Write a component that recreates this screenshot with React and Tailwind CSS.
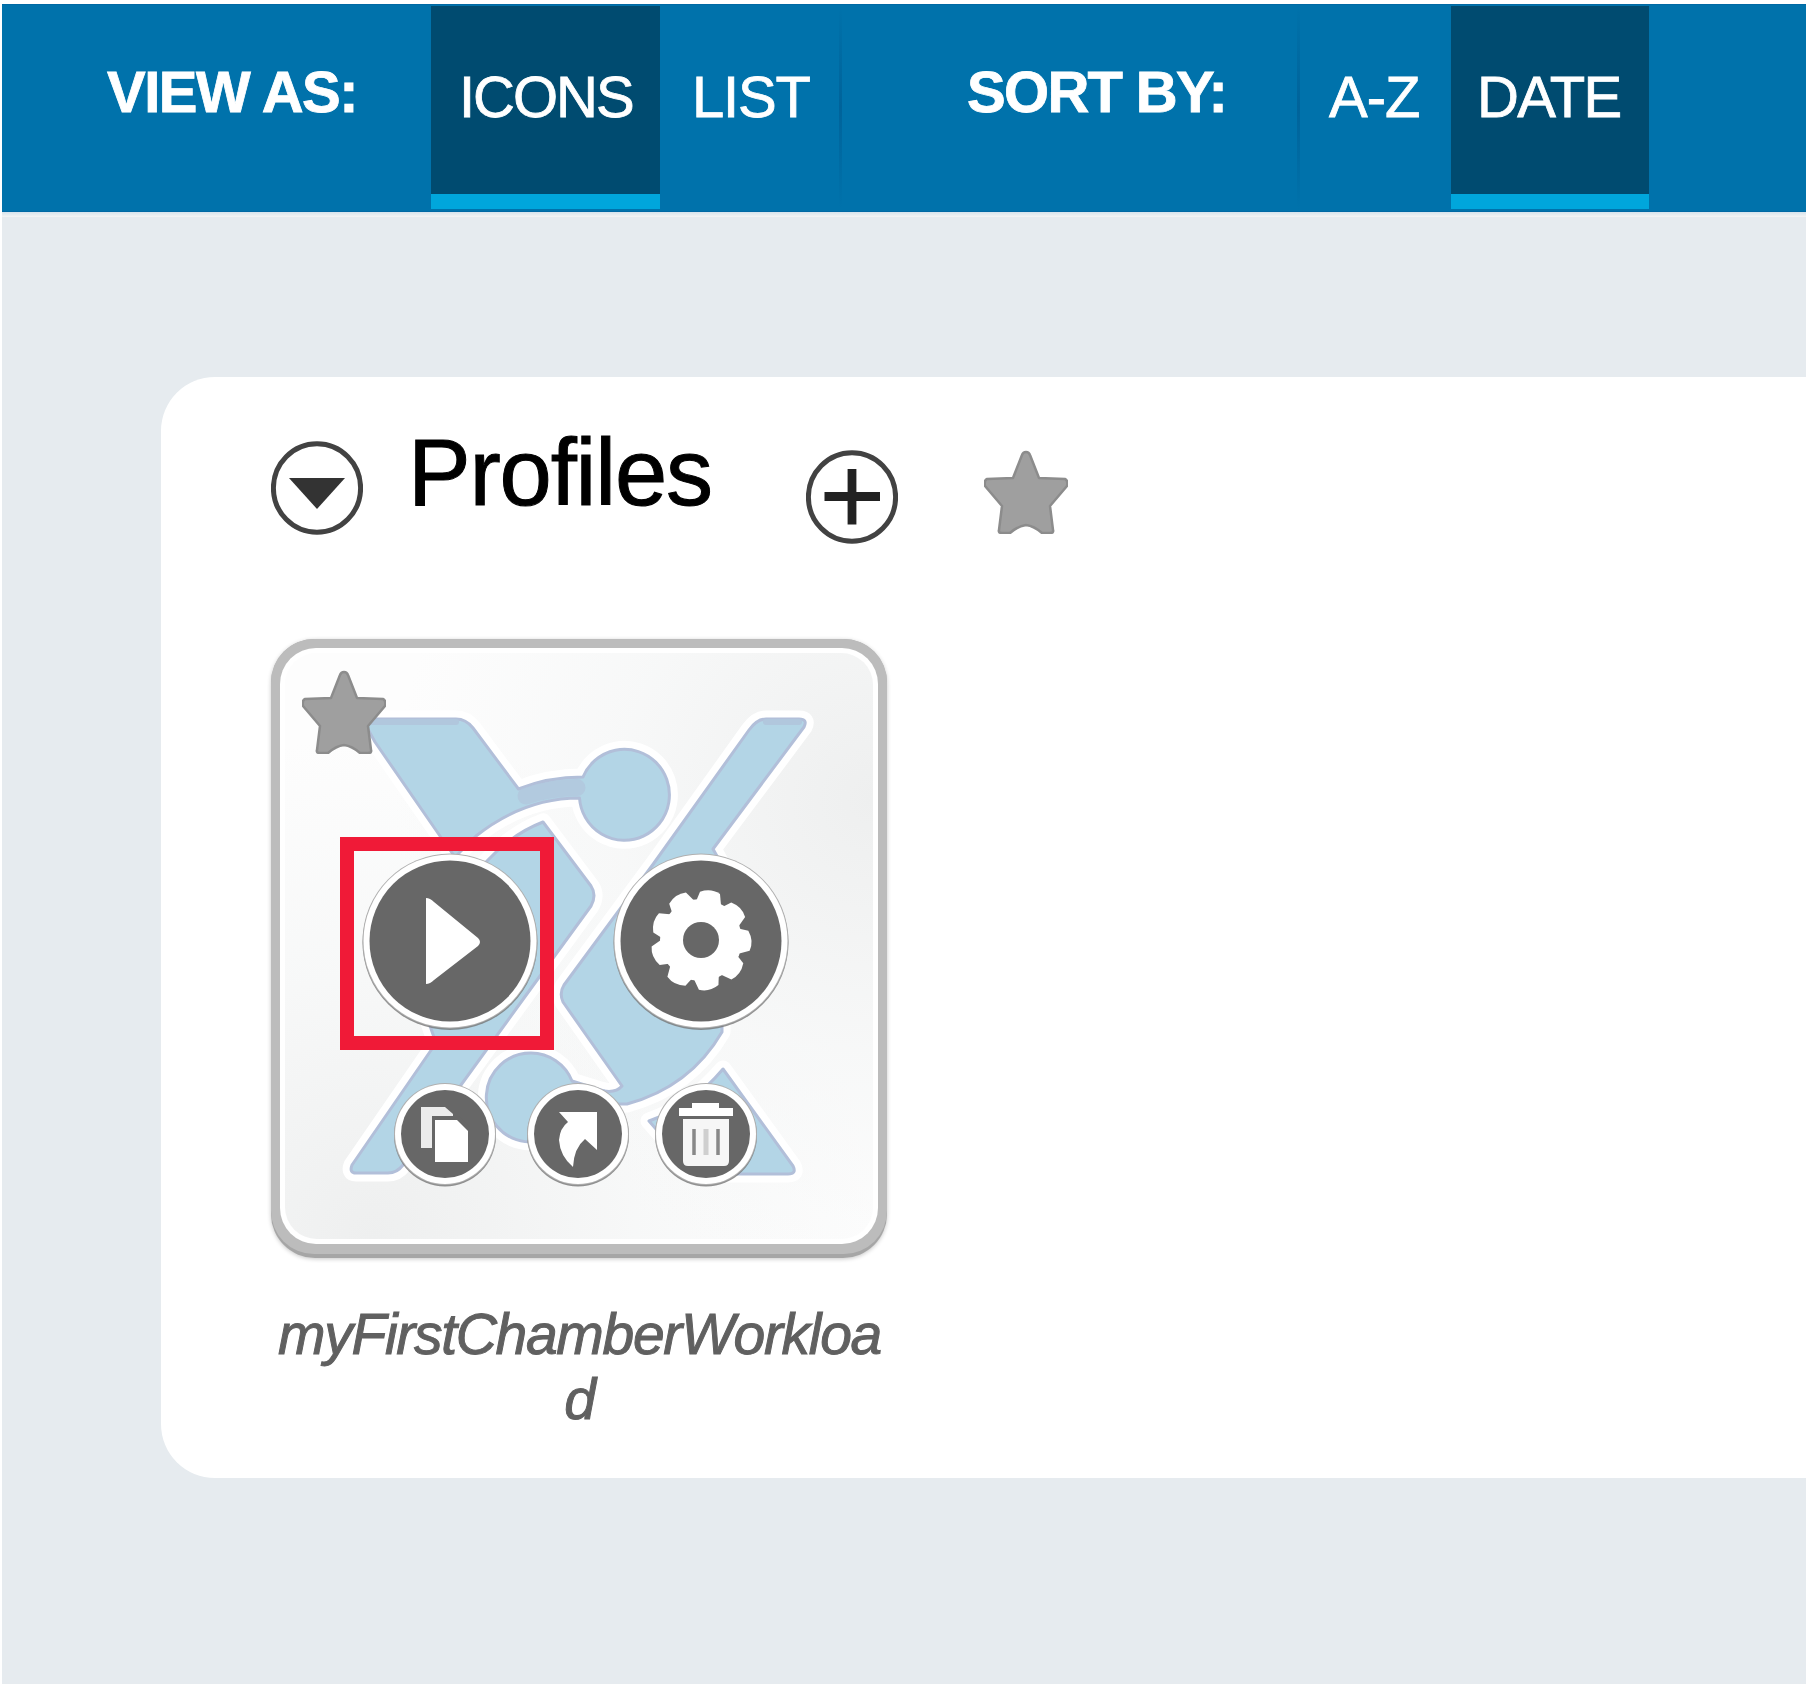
const STAR =
  'M42 2 Q45 2 46 5 L55 28 L81 29 Q84 30 83 36 L66 56 L69 80 Q70 83 66 83 L58 83 Q50 76 42 75 Q34 76 26 83 L18 83 Q14 83 15 80 L18 56 L1 36 Q0 30 3 29 L29 28 L38 5 Q39 2 42 2 Z';

function Star() {
  return (
    <svg width="84" height="84" viewBox="0 0 84 84" className="block">
      <path d={STAR} fill="#9f9f9f" stroke="#8c8c8c" strokeWidth="2.5" strokeLinejoin="round" />
    </svg>
  );
}

function RoundIcon({ children }) {
  return (
    <svg width="92" height="94" viewBox="0 0 92 94" className="block">
      <ellipse cx="46" cy="47" rx="43.6" ry="44.3" fill="#fff" stroke="#424242" strokeWidth="5" />
      {children}
    </svg>
  );
}

function Tab({ label, active, className }) {
  return (
    <div
      className={
        'mt-[1px] h-[203px] whitespace-nowrap pt-[61px] text-[58px] leading-[60px] [-webkit-text-stroke:0.8px_#fff] ' +
        (active ? 'border-b-[15px] border-[#00a6dc] bg-[#004b70] ' : '') +
        className
      }
    >
      {label}
    </div>
  );
}

function Divider() {
  return <div className="h-[204px] w-[3px] bg-linear-to-b from-transparent via-[#00639a] to-transparent" />;
}

function Toolbar() {
  return (
    <div className="flex h-[208px] items-start border-y-[1px] border-[#0069a4] bg-[#0072ab] text-white">
      <div className="ml-[105px] w-[324px] whitespace-nowrap pt-[57px] text-[58px] font-bold leading-[60px] tracking-[-1.5px] [-webkit-text-stroke:0.8px_#fff]">
        VIEW AS:
      </div>
      <Tab label="ICONS" active className="w-[229px] pl-[28px] tracking-[-2px]" />
      <Tab label="LIST" className="w-[179px] pl-[32px] tracking-[-1.2px]" />
      <Divider />
      <div className="ml-[125px] w-[330px] whitespace-nowrap pt-[57px] text-[58px] font-bold leading-[60px] tracking-[-1.7px] [-webkit-text-stroke:0.8px_#fff]">
        SORT BY:
      </div>
      <Divider />
      <Tab label="A-Z" className="w-[151px] pl-[29px] tracking-[-1px]" />
      <Tab label="DATE" active className="w-[198px] pl-[26px] tracking-[-1.7px]" />
    </div>
  );
}

const LOGO = [
  'M372 719 H456 Q466 719 473 728 L518.500 789 Q548 777 583 777 A45 45.500 0 1 1 579.500 798 Q524 798 476 836 L455 857 L440 836 L375 742 L364 722 Q364 719 372 719 Z',
  'M543 822 L591 886 Q597 895 591 906 L532 987 L403 1165 Q397 1173 388 1173 H356 Q349 1173 352 1165 L436 1043 L400 940 L487 861 Q512 834 543 822 Z',
  'M766 719 H799 Q808 719 804 727 L713 849 L722 865 V1032 Q690 1087 627 1104 L600 1104 L604 1091 Q616 1093 622 1086 L563 1002 Q559 993 564 985 L654 863 L749 730 Q757 719 766 719 Z',
  'M723 1069 L793 1166 Q797 1174 788 1174 H710 Q692 1174 683 1160 L649 1121 Q692 1106 723 1069 Z',
  'M531 1053 A44.500 44.500 0 0 1 572 1081 L604 1091 L600 1104 L574.500 1106 A44.500 44.500 0 1 1 531 1053 Z',
];

function Logo() {
  return (
    <svg width="616" height="620" viewBox="271 639 616 620" className="absolute left-0 top-0">
      <g fill="#fff" stroke="#fff" strokeWidth="17" strokeLinejoin="round">
        {LOGO.map((d) => (
          <path key={d} d={d} />
        ))}
      </g>
      <g fill="#b3d5e6" stroke="#b2bfd9" strokeWidth="3" strokeLinejoin="round">
        {LOGO.map((d) => (
          <path key={d} d={d} />
        ))}
      </g>
      <g fill="none" stroke="#b1c7dd" strokeLinecap="round">
        <path d="M526 796 Q550 788 577 787.500" strokeWidth="17" opacity="0.8" />
        <path d="M370 722 H456 M766 722 H799" strokeWidth="6" />
      </g>
    </svg>
  );
}

function Disc({ size, inner, label, className, children }) {
  const half = size / 2;
  return (
    <button aria-label={label} className={'absolute block ' + className}>
      <svg width={size} height={size} viewBox={`${-half} ${-half} ${size} ${size}`} className="block overflow-visible">
        <circle cy="1.500" r={inner + 7} fill="#777" opacity="0.8" />
        <circle r={inner + 7} fill="#b0b0b0" />
        <circle r={inner + 6} fill="#fff" />
        <circle r={inner} fill="#676767" />
        {children}
      </svg>
    </button>
  );
}

const TEETH = [0, 40, 80, 120, 160, 200, 240, 280, 320];

function ProfileTile() {
  return (
    <div className="relative h-[619px] w-[616px] shrink-0 rounded-[44px] bg-[#a6a6a6] pb-[4px] shadow-[0_1px_4px_rgba(0,0,0,0.22)]">
      <div className="h-[615px] rounded-[43px] bg-[#bcbcbc] px-[9px] pb-[10px] pt-[9px]">
        <div className="h-full rounded-[36px] bg-white p-[5px]">
          <div className="h-full rounded-[32px] bg-[radial-gradient(circle_at_100%_25%,#eeefef_0%,rgba(246,247,247,0.8)_35%,transparent_65%),radial-gradient(circle_at_15%_100%,#eeefef_0%,rgba(246,247,247,0.8)_35%,transparent_65%)] bg-[#fdfdfd]" />
        </div>
      </div>
      <Logo />
      <div className="absolute left-[31px] top-[31px]">
        <Star />
      </div>
      <Disc label="Run" size={180} inner={80.5} className="left-[89px] top-[212px]">
        <path d="M-24 -43 Q-20 -43 -16 -39 L28 -3 Q32 1 28 5 L-16 39 Q-20 43 -24 43 Z" fill="#fff" />
      </Disc>
      <Disc label="Settings" size={180} inner={80.5} className="left-[340px] top-[212px]">
        <g transform="translate(0 -1)" fill="#fff">
          <circle r="41" />
          {TEETH.map((a) => (
            <path key={a} transform={`rotate(${a + 12})`} d="M-13 -36 L-11 -47 Q-1 -53 9 -49 L13 -36 Z" />
          ))}
          <circle r="18" fill="#676767" />
        </g>
      </Disc>
      <Disc label="Copy" size={104} inner={44} className="left-[122px] top-[443px]">
        <path d="M-24 -27 H0 L8 -20 V14 H-24 Z" fill="#ececec" />
        <path d="M-13 -18 H14 L25 -7 V31 H-13 Z" fill="#676767" />
        <path d="M-10 -14 H12 L23 -3 V28 H-10 Z" fill="#fff" />
      </Disc>
      <Disc label="Create shortcut" size={104} inner={44} className="left-[255px] top-[443px]">
        <path d="M-19 -22 H19 V16 L7 5 Q-4 14 -5 33 Q-18 22 -19 6 Q-18 -6 -10 -12 Z" fill="#fff" />
      </Disc>
      <Disc label="Delete" size={104} inner={44} className="left-[383px] top-[443px]">
        <path d="M-27 -26 H-14 V-31 H13 V-26 H27 V-18 H-27 Z" fill="#fff" />
        <path d="M-23 -15 H23 V27 Q23 32 18 32 H-18 Q-23 32 -23 27 Z" fill="#f6f6f6" />
        <path d="M-12 -5 V21 M12 -5 V21" stroke="#888" strokeWidth="3.5" />
        <path d="M0 -5 V21" stroke="#cfcfcf" strokeWidth="5" />
      </Disc>
      <div className="absolute left-[69px] top-[198px] h-[213px] w-[214px] border-[14px] border-[#f01a37]" />
    </div>
  );
}

export default function App() {
  return (
    <div className="h-[1686px] w-[1810px] bg-white pl-[2px] pt-[4px] font-['Liberation_Sans',Arial,sans-serif]">
      <div className="flex h-[1680px] w-[1804px] flex-col overflow-hidden bg-[#e6ebef]">
        <Toolbar />
        <div className="h-[5px] bg-linear-to-b from-[#d5e3ec] to-[#f5f5f4]" />
        <section className="ml-[159px] mt-[160px] h-[1101px] rounded-l-[54px] bg-white pl-[110px] pt-[64px]">
          <div className="flex h-[198px] items-start">
            <RoundIcon>
              <path d="M18 37 H74 L46 68 Z" fill="#333" />
            </RoundIcon>
            <h1 className="-mt-[18px] ml-[45px] w-[398px] whitespace-nowrap text-[94px] font-normal leading-[100px] tracking-[-1.2px] text-black [-webkit-text-stroke:1px_#000]">
              Profiles
            </h1>
            <div className="mt-[9px]">
              <RoundIcon>
                <path d="M46 19 V74.500 M18.500 46.500 H74" stroke="#222" strokeWidth="8.8" />
              </RoundIcon>
            </div>
            <div className="ml-[86px] mt-[9px]">
              <Star />
            </div>
          </div>
          <ProfileTile />
          <p className="mt-[44px] w-[617px] whitespace-nowrap text-center text-[57px] italic leading-[65px] tracking-[-1.3px] text-[#606060] [-webkit-text-stroke:1px_#606060]">
            myFirstChamberWorkloa
            <br />d
          </p>
        </section>
      </div>
    </div>
  );
}
